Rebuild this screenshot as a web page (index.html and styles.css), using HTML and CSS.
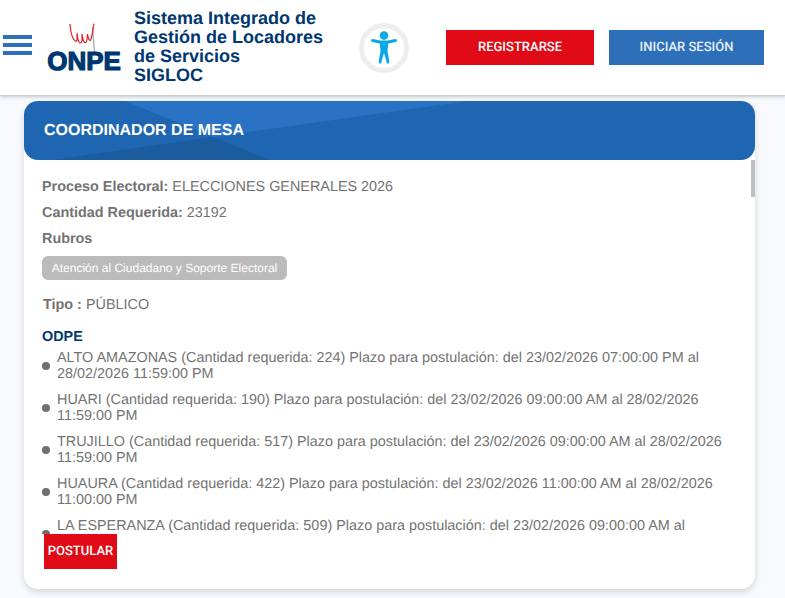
FILE: index.html
```html
<!DOCTYPE html>
<html lang="es">
<head>
    <meta charset="UTF-8">
    <meta name="viewport" content="width=device-width, initial-scale=1.0">
    <title>SIGLOC - Coordinador de Mesa</title>
    <link rel="stylesheet" href="styles.css">
</head>
<body>

    <!-- Header -->
    <header class="topbar">
        <button class="menu-toggle" aria-label="Menu">
            <span></span><span></span><span></span>
        </button>

        <div class="logo">
            <svg class="logo-hand" width="30" height="31" viewBox="0 0 30 31">
                <path d="M3 12 L24 10 L27 5 L29 30 L6 30 Z" fill="#fff"/>
                <path d="M23.5 4 L25.5 30" fill="none" stroke="#a9a9a9" stroke-width="1.3"/>
                <path d="M1 1 C1.5 7 2.5 13 4.5 16 C6 18.5 7.5 19 8 17 C8.5 15 7.5 12 8 11 C8.5 14 9 20 11.5 20 C13.5 20 13 14 13 11 C13.5 14 14 20 16.5 19.5 C18.5 19 18 14 18.5 11 C19 14 20 18.5 21.5 17 C23 15 23.5 8 25 0.5" fill="none" stroke="#e2202c" stroke-width="1.2"/>
            </svg>
            <span class="logo-text">ONPE</span>
        </div>

        <div class="app-title">Sistema Integrado de Gestión de Locadores de Servicios<br>SIGLOC</div>

        <button class="access-btn" aria-label="Accesibilidad">
            <svg width="34" height="36" viewBox="0 0 34 36">
                <circle cx="17" cy="5.5" r="4.3" fill="#0aa8e6"/>
                <path d="M5.5 10.5 L13 12 H21 L28.5 10.5" fill="none" stroke="#0aa8e6" stroke-width="3" stroke-linecap="round" stroke-linejoin="round"/>
                <path d="M12.5 11.5 H21.5 L20.5 21 L22.5 32 L21.5 33.5 H20 L17 23 L14 33.5 H12.5 L11.5 32 L13.5 21 Z" fill="#0aa8e6"/>
            </svg>
        </button>

        <a class="btn btn-red btn-register" href="#">REGISTRARSE</a>
        <a class="btn btn-blue btn-login" href="#">INICIAR SESIÓN</a>
    </header>

    <!-- Convocatoria -->
    <main class="page">
        <section class="card">
            <div class="card-head">
                <h2>COORDINADOR DE MESA</h2>
            </div>

            <div class="card-body">
                <p class="field"><b>Proceso Electoral:</b> ELECCIONES GENERALES 2026</p>
                <p class="field"><b>Cantidad Requerida:</b> 23192</p>
                <p class="field field-rubros"><b>Rubros</b></p>
                <span class="chip">Atención al Ciudadano y Soporte Electoral</span>
                <p class="field field-tipo"><b>Tipo :</b> PÚBLICO</p>

                <h3 class="odpe-title">ODPE</h3>
                <ul class="odpe-list">
                    <li>ALTO AMAZONAS (Cantidad requerida: 224) Plazo para postulación: del 23/02/2026 07:00:00 PM al 28/02/2026 11:59:00 PM</li>
                    <li>HUARI (Cantidad requerida: 190) Plazo para postulación: del 23/02/2026 09:00:00 AM al 28/02/2026 11:59:00 PM</li>
                    <li>TRUJILLO (Cantidad requerida: 517) Plazo para postulación: del 23/02/2026 09:00:00 AM al 28/02/2026 11:59:00 PM</li>
                    <li>HUAURA (Cantidad requerida: 422) Plazo para postulación: del 23/02/2026 11:00:00 AM al 28/02/2026 11:00:00 PM</li>
                    <li>LA ESPERANZA (Cantidad requerida: 509) Plazo para postulación: del 23/02/2026 09:00:00 AM al</li>
                </ul>
                <div class="scroll-thumb"></div>
            </div>

            <div class="card-foot">
                <a class="btn btn-red btn-apply" href="#">POSTULAR</a>
            </div>
        </section>
    </main>

</body>
</html>
```

FILE: styles.css
```css
* {
    box-sizing: border-box;
}

html, body {
    height: 100%;
}

body {
    margin: 0;
    overflow: hidden;
    font-family: "Liberation Sans", Arial, sans-serif;
    font-size: 14.4px;
    line-height: 16px;
    color: #737373;
    background: #f8f9fc;
    text-rendering: geometricPrecision;
}

/* Header */
.topbar {
    display: flex;
    align-items: center;
    height: 96px;
    padding-left: 3px;
    background: #fff;
    border-bottom: 1px solid #ccc;
    box-shadow: 0 1px 3px rgba(0, 0, 0, 0.2);
}

.menu-toggle {
    display: flex;
    flex-direction: column;
    gap: 4px;
    width: 29px;
    padding: 0;
    margin: 0 15px 5px 0;
    background: none;
    border: none;
}

.menu-toggle span {
    display: block;
    height: 4px;
    background: #2d6fb8;
}

.logo {
    display: flex;
    flex-direction: column;
    align-items: center;
    width: 74px;
    margin-right: 13px;
}

.logo-hand {
    display: block;
    margin: 1px 0 -6px 0;
}

.logo-text {
    font-size: 26px;
    font-weight: bold;
    line-height: 26px;
    color: #003770;
    -webkit-text-stroke: 1.2px #003770;
}

.app-title {
    width: 200px;
    margin: 0 25px 2px 0;
    font-size: 18px;
    font-weight: bold;
    line-height: 19px;
    color: #003770;
}

.access-btn {
    display: flex;
    align-items: center;
    justify-content: center;
    width: 50px;
    height: 50px;
    padding: 0;
    margin-right: 37px;
    background: #fff;
    border: 5px solid #eee;
    border-radius: 50%;
}

.btn {
    display: flex;
    align-items: center;
    justify-content: center;
    height: 35px;
    font-family: Roboto, Arial, sans-serif;
    font-size: 13px;
    font-weight: 500;
    color: #fff;
    text-decoration: none;
}

.btn-red {
    background: #e00a16;
}

.btn-blue {
    background: #2d6fb8;
    color: #e6eef8;
}

.btn-register {
    width: 148px;
    margin-right: 15px;
}

.btn-login {
    width: 155px;
}

/* Card */
.page {
    padding: 5px 30px 0 24px;
}

.card {
    background: #fff;
    border-radius: 14px;
    box-shadow: 0 3px 6px rgba(0, 0, 0, 0.14);
}

.card-head {
    position: relative;
    height: 59px;
    padding: 0 20px;
    overflow: hidden;
    border-radius: 14px;
    background: #1e66b1;
}

.card-head::before {
    content: "";
    position: absolute;
    inset: 0;
    background: #2a73c4;
    clip-path: polygon(101px 0, 443px 0, 189px 36px);
}

.card-head::after {
    content: "";
    position: absolute;
    inset: 0;
    background: #1b5c9f;
    clip-path: polygon(189px 36px, 246px 59px, 27px 59px);
}

.card-head h2 {
    position: relative;
    z-index: 1;
    margin: 0;
    font-size: 16px;
    line-height: 59px;
    color: #fff;
}

.card-body {
    position: relative;
    height: 374px;
    padding: 19px 18px 0 18px;
    overflow: hidden;
}

.field {
    margin: 0 0 10px 0;
}

.field-rubros {
    margin-bottom: 9px;
}

.chip {
    display: block;
    width: 245px;
    height: 24px;
    margin-bottom: 17px;
    font-size: 12px;
    line-height: 24px;
    text-align: center;
    color: #fff;
    background: #bbb;
    border-radius: 6px;
}

.field-tipo {
    margin: 0 0 16px 1px;
}

.odpe-title {
    margin: 0 0 5px 0;
    font-size: 14.4px;
    line-height: 16px;
    color: #003770;
}

.odpe-list {
    width: 698px;
    padding: 0;
    margin: 0;
    list-style: none;
}

.odpe-list li {
    position: relative;
    padding-left: 15px;
    margin-bottom: 10px;
}

.odpe-list li::before {
    content: "";
    position: absolute;
    left: 0;
    top: 12px;
    width: 8px;
    height: 8px;
    background: #6f6f6f;
    border-radius: 50%;
}

.scroll-thumb {
    position: absolute;
    top: 0;
    right: 0;
    width: 4px;
    height: 37px;
    background: #bfbfbf;
}

.card-foot {
    height: 55px;
    padding-left: 20px;
}

.btn-apply {
    width: 73px;
}
```
